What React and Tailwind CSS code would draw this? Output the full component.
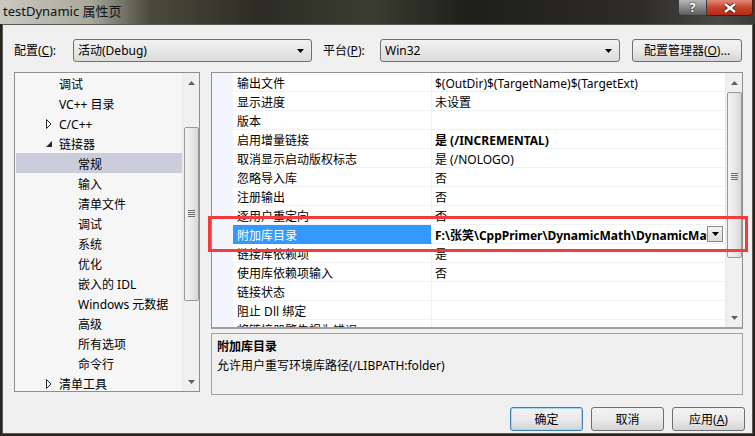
import React from 'react';

const treeItems = [
  { t: '调试', lv: 1 },
  { t: 'VC++ 目录', lv: 1 },
  { t: 'C/C++', lv: 1, arrow: 'closed' },
  { t: '链接器', lv: 1, arrow: 'open' },
  { t: '常规', lv: 2, sel: true },
  { t: '输入', lv: 2 },
  { t: '清单文件', lv: 2 },
  { t: '调试', lv: 2 },
  { t: '系统', lv: 2 },
  { t: '优化', lv: 2 },
  { t: '嵌入的 IDL', lv: 2 },
  { t: 'Windows 元数据', lv: 2 },
  { t: '高级', lv: 2 },
  { t: '所有选项', lv: 2 },
  { t: '命令行', lv: 2 },
  { t: '清单工具', lv: 1, arrow: 'closed' },
];

const props = [
  { k: '输出文件', v: '$(OutDir)$(TargetName)$(TargetExt)' },
  { k: '显示进度', v: '未设置' },
  { k: '版本', v: '' },
  { k: '启用增量链接', v: '是 (/INCREMENTAL)', bold: true },
  { k: '取消显示启动版权标志', v: '是 (/NOLOGO)' },
  { k: '忽略导入库', v: '否' },
  { k: '注册输出', v: '否' },
  { k: '逐用户重定向', v: '否' },
  { k: '附加库目录', v: 'F:\\张笑\\CppPrimer\\DynamicMath\\DynamicMath\\Debug', bold: true, sel: true },
  { k: '链接库依赖项', v: '是' },
  { k: '使用库依赖项输入', v: '否' },
  { k: '链接状态', v: '' },
  { k: '阻止 Dll 绑定', v: '' },
  { k: '将链接器警告视为错误', v: '' },
];

// small black down arrow used by combo boxes
const DownArrow = ({ className = '' }) => (
  <svg width="7" height="4" viewBox="0 0 7 4" className={className}>
    <path d="M0 0H7L3.5 4Z" fill="#000" />
  </svg>
);

const ComboBox = ({ value, width }) => (
  <div
    className={`flex items-center h-[23px] ${width} border border-[#707070] rounded-[3px] bg-gradient-to-b from-[#f2f2f2] to-[#dcdcdc] pl-[4px] pr-[7px]`}
  >
    <span className="flex-1 leading-[16px] pt-[1px]">{value}</span>
    <DownArrow />
  </div>
);

const Button = ({ children, primary }) => (
  <div
    className={`flex items-center justify-center w-[73px] h-[24px] rounded-[3px] border bg-gradient-to-b from-[#f2f2f2] via-[#ebebeb] to-[#d4d4d4] leading-[16px] pt-[1px] ${
      primary ? 'border-[#3c7fb1] shadow-[inset_0_0_0_1px_#a6d8f5]' : 'border-[#707070]'
    }`}
  >
    {children}
  </div>
);

// win7 style vertical scrollbar
const ScrollBar = ({ thumbTop, thumbHeight, gripTop }) => (
  <div className="relative shrink-0 w-[17px] h-full bg-[#f0f0f0] border-l border-[#e8e8e8]">
    <svg width="7" height="4" viewBox="0 0 7 4" className="absolute left-[5px] top-[8px]">
      <path d="M0 4H7L3.5 0Z" fill="#606060" />
    </svg>
    <div
      className="absolute left-[1px] w-[15px] rounded-[2px] border border-[#9a9a9a] bg-gradient-to-r from-[#f3f3f3] via-[#e9e9e9] to-[#d6d6d6]"
      style={{ top: thumbTop, height: thumbHeight }}
    >
      <div className="absolute left-[3px] w-[7px] flex flex-col gap-[1px]" style={{ top: gripTop }}>
        <div className="h-[1px] bg-[#6f6f6f]" />
        <div className="h-[1px] bg-[#6f6f6f]" />
        <div className="h-[1px] bg-[#6f6f6f]" />
        <div className="h-[1px] bg-[#6f6f6f]" />
      </div>
    </div>
    <svg width="7" height="4" viewBox="0 0 7 4" className="absolute left-[5px] bottom-[7px]">
      <path d="M0 0H7L3.5 4Z" fill="#606060" />
    </svg>
  </div>
);

const TreeArrow = ({ kind }) =>
  kind === 'open' ? (
    <svg width="6" height="6" viewBox="0 0 6 6">
      <path d="M6 0V6H0Z" fill="#262626" />
    </svg>
  ) : (
    <svg width="6" height="10" viewBox="0 0 6 10">
      <path d="M0.5 0.5L5 5L0.5 9.5Z" fill="none" stroke="#262626" strokeWidth="1" />
    </svg>
  );

export default function App() {
  return (
    <div className="relative w-[755px] h-[436px] overflow-hidden bg-[#26261f] text-[12px] text-black font-['Noto_Sans','Noto_Sans_CJK_SC',sans-serif]">
      {/* title bar */}
      <div className="flex h-[24px] bg-[linear-gradient(90deg,#c9c9c0_0px,#a8a89c_90px,#4a4a3c_150px,#2c2c24_260px,#3a3d30_370px,#1e1e1a_470px,#2e2c28_640px,#4a4844_720px,#3a3a36_755px)]">
        <div className="flex-1 pl-[3px] pt-[3px] leading-[16px] text-[#111] text-[13px]">
          testDynamic 属性页
        </div>
        <div className="flex h-[16px] mr-[2px]">
          <div className="flex items-center justify-center w-[29px] h-full border border-t-0 border-[#3a3a3a] rounded-bl-[4px] bg-gradient-to-b from-[#b8b8b8] via-[#8a8a8a] to-[#5c5c5c] text-white font-bold text-[12px] leading-[12px] [text-shadow:0_0_2px_#000]">
            ?
          </div>
          <div className="flex items-center justify-center w-[46px] h-full border border-t-0 border-l-0 border-[#4a1a10] rounded-br-[4px] bg-gradient-to-b from-[#e08a78] via-[#c8432c] to-[#b02a14]">
            <svg width="14" height="10" viewBox="0 0 14 10">
              <path d="M2 1L12 9M12 1L2 9" stroke="#3a1a10" strokeWidth="4" />
              <path d="M2 1L12 9M12 1L2 9" stroke="#fff" strokeWidth="2.4" />
            </svg>
          </div>
        </div>
      </div>

      {/* dialog body */}
      <div className="ml-[2px] mr-[2px] h-[410px] border border-[#5a5a5a] bg-[#f0f0f0] pl-[11px] pr-[7px] pt-[14px]">
        {/* configuration row */}
        <div className="flex items-center h-[23px]">
          <span className="w-[59px] leading-[16px] pt-[1px]">
            配置(<span className="underline">C</span>):
          </span>
          <ComboBox value="活动(Debug)" width="w-[239px]" />
          <span className="ml-[11px] w-[57px] leading-[16px] pt-[1px]">
            平台(<span className="underline">P</span>):
          </span>
          <ComboBox value="Win32" width="w-[240px]" />
          <div className="ml-[12px] flex items-center justify-center w-[110px] h-[23px] rounded-[3px] border border-[#707070] bg-gradient-to-b from-[#f2f2f2] via-[#ebebeb] to-[#d4d4d4] leading-[16px] pt-[1px]">
            配置管理器(<span className="underline">O</span>)...
          </div>
        </div>

        {/* main area */}
        <div className="flex mt-[10px] h-[323px]">
          {/* tree */}
          <div className="flex w-[186px] h-[320px] border border-[#8e8f8f] bg-[#f6f6f6]">
            <div className="flex-1 min-w-0 flex flex-col pl-[1px]">
              {treeItems.map((it, i) => (
                <div
                  key={i}
                  className={`flex items-center h-[20px] shrink-0 leading-[16px] pt-[4px] ${it.sel ? 'bg-[#cbcdda]' : ''}`}
                >
                  {it.lv === 1 ? (
                    <>
                      <div className="w-[43px] flex justify-end pr-[7px] -mt-[3px]">
                        {it.arrow && <TreeArrow kind={it.arrow} />}
                      </div>
                      <span>{it.t}</span>
                    </>
                  ) : (
                    <span className="pl-[62px]">{it.t}</span>
                  )}
                </div>
              ))}
            </div>
            <ScrollBar thumbTop={54} thumbHeight={174} gripTop={82} />
          </div>

          {/* property grid + description */}
          <div className="ml-[11px] w-[532px] flex flex-col">
            <div className="flex h-[257px] border border-[#8e8f8f] border-b-2 border-b-[#a0a0a0] bg-white overflow-hidden">
              <div className="flex-1 min-w-0 flex flex-col">
                {props.map((p, i) => (
                  <div key={i} className="flex h-[19px] shrink-0 leading-[16px]">
                    <div className="w-[21px] shrink-0 bg-[#f2f5fb]" />
                    <div
                      className={`w-[199px] shrink-0 pl-[4px] pt-[4px] flex items-center border-b border-r border-[#eff2f7] ${
                        p.sel ? 'bg-[#3399ff] text-white border-b-[#3399ff]' : ''
                      }`}
                    >
                      {p.k}
                    </div>
                    <div className="flex-1 min-w-0 flex items-center border-b border-[#eff2f7] pl-[3px]">
                      <span
                        className={`flex-1 min-w-0 overflow-hidden whitespace-nowrap pt-[4px] ${p.bold ? 'font-bold' : ''}`}
                      >
                        {p.v}
                      </span>
                      {p.sel && (
                        <div className="shrink-0 mr-[2px] flex items-center justify-center w-[16px] h-[16px] border border-[#8a8a8a] bg-gradient-to-b from-[#f4f4f4] to-[#dcdcdc]">
                          <DownArrow />
                        </div>
                      )}
                    </div>
                  </div>
                ))}
              </div>
              <ScrollBar thumbTop={19} thumbHeight={166} gripTop={80} />
            </div>

            <div className="mt-[4px] h-[62px] border border-[#a0a0a0] bg-[#f0f0f0] px-[5px] pt-[3px] leading-[19px]">
              <div className="font-bold">附加库目录</div>
              <div>允许用户重写环境库路径(/LIBPATH:folder)</div>
            </div>
          </div>
        </div>

        {/* dialog buttons */}
        <div className="flex justify-end gap-[8px] mt-[12px]">
          <Button primary>确定</Button>
          <Button>取消</Button>
          <Button>
            应用(<span className="underline">A</span>)
          </Button>
        </div>
      </div>

      {/* red annotation frame */}
      <div className="absolute left-[208px] top-[216px] w-[540px] h-[36px] border-[3px] border-[#f23c3c] pointer-events-none" />
    </div>
  );
}
